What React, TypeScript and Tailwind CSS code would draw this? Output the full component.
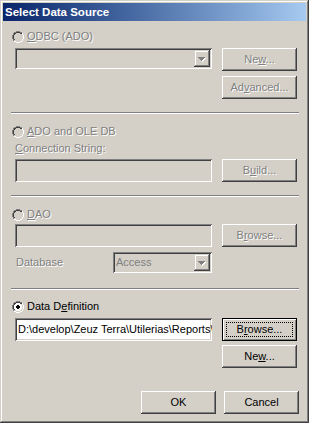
import React from "react";

const radioPattern = [
  "....GGGG....",
  "..GGKKKKGG..",
  ".GKKFFFFKKW.",
  ".GKFFFFFFHW.",
  "GKFFFFFFFFHW",
  "GKFFFFFFFFHW",
  "GKFFFFFFFFHW",
  "GKFFFFFFFFHW",
  ".GKFFFFFFHW.",
  ".GHHFFFFHHW.",
  "..WWHHHHWW..",
  "....WWWW....",
];
const dotPattern = ["....XX......", "...XXXX.....", "...XXXX.....", "....XX......"];

function Radio({ checked = false, disabled = false }: { checked?: boolean; disabled?: boolean }) {
  const colors: Record<string, string> = {
    G: "#808080",
    K: "#404040",
    W: "#ffffff",
    H: "#d4d0c8",
    F: disabled ? "#d4d0c8" : "#ffffff",
  };
  const rects: React.ReactNode[] = [];
  radioPattern.forEach((row, y) =>
    row.split("").forEach((c, x) => {
      if (c !== ".") rects.push(<rect key={`r${x}-${y}`} x={x} y={y} width={1} height={1} fill={colors[c]} />);
    })
  );
  if (checked) {
    dotPattern.forEach((row, y) =>
      row.split("").forEach((c, x) => {
        if (c === "X") rects.push(<rect key={`d${x}-${y}`} x={x + 1} y={y + 4} width={1} height={1} fill={disabled ? "#808080" : "#000"} />);
      })
    );
  }
  return (
    <svg width={12} height={12} viewBox="0 0 12 12" shapeRendering="crispEdges" className="shrink-0">
      {rects}
    </svg>
  );
}

function Arrow({ disabled }: { disabled: boolean }) {
  const rows = [
    [0, 7],
    [1, 5],
    [2, 3],
    [3, 1],
  ];
  return (
    <svg width={8} height={5} viewBox="0 0 8 5" shapeRendering="crispEdges">
      {disabled &&
        rows.map(([y, w]) => <rect key={`s${y}`} x={y + 1} y={y + 1} width={w} height={1} fill="#fff" />)}
      {rows.map(([y, w]) => (
        <rect key={`a${y}`} x={y} y={y} width={w} height={1} fill={disabled ? "#808080" : "#000"} />
      ))}
    </svg>
  );
}

function Combo({ width, text = "", disabled = true }: { width: string; text?: string; disabled?: boolean }) {
  return (
    <div
      className={`${width} h-[21px] bg-[#d4d0c8] p-[2px] flex items-stretch shadow-[inset_1px_1px_#808080,inset_-1px_-1px_#fff,inset_2px_2px_#404040,inset_-2px_-2px_#d4d0c8]`}
    >
      <div className="flex-1 flex items-center pl-[1px] text-[#808080] whitespace-nowrap overflow-hidden">{text}</div>
      <div className="w-[16px] flex items-center justify-center pt-[1px] shadow-[inset_-1px_-1px_#404040,inset_1px_1px_#d4d0c8,inset_-2px_-2px_#808080,inset_2px_2px_#fff]">
        <Arrow disabled={disabled} />
      </div>
    </div>
  );
}

function Edit({ text = "", disabled = true }: { text?: string; disabled?: boolean }) {
  return (
    <div
      className={`w-[197px] h-[23px] ${disabled ? "bg-[#d4d0c8]" : "bg-white"} pl-[3px] pr-[2px] flex items-center overflow-hidden whitespace-nowrap shadow-[inset_1px_1px_#808080,inset_-1px_-1px_#fff,inset_2px_2px_#404040,inset_-2px_-2px_#d4d0c8]`}
    >
      {text}
    </div>
  );
}

function Btn({
  children,
  disabled = false,
  isDefault = false,
  className = "",
}: {
  children: React.ReactNode;
  disabled?: boolean;
  isDefault?: boolean;
  className?: string;
}) {
  if (isDefault) {
    return (
      <div
        className={`w-[75px] h-[23px] shrink-0 border border-black p-[3px] flex shadow-[inset_1px_1px_#fff,inset_-1px_-1px_#808080] ${className}`}
      >
        <div className="flex-1 border border-dotted border-black flex items-center justify-center">{children}</div>
      </div>
    );
  }
  return (
    <div
      className={`w-[75px] h-[23px] shrink-0 flex items-center justify-center shadow-[inset_-1px_-1px_#404040,inset_1px_1px_#fff,inset_-2px_-2px_#808080,inset_2px_2px_#d4d0c8] ${
        disabled ? "text-[#808080] [text-shadow:1px_1px_0_#fff]" : "text-black"
      } ${className}`}
    >
      {children}
    </div>
  );
}

function Sep({ className = "" }: { className?: string }) {
  return <div className={`ml-[8px] w-[288px] h-[2px] border-t border-t-[#808080] border-b border-b-white ${className}`} />;
}

export default function App() {
  const dis = "text-[#808080] [text-shadow:1px_1px_0_#fff]";
  return (
    <div className="w-[309px] h-[423px] bg-[#d4d0c8] p-[3px] flex flex-col font-['Liberation_Sans',Arial,sans-serif] text-[11px] leading-[13px] text-black shadow-[inset_-1px_-1px_#404040,inset_1px_1px_#d4d0c8,inset_-2px_-2px_#808080,inset_2px_2px_#fff]">
      <div className="h-[18px] shrink-0 flex items-center pl-[2px] bg-gradient-to-r from-[#0a246a] to-[#a6caf0] text-white font-bold text-[11.5px]">
        Select Data Source
      </div>

      {/* ODBC */}
      <div className="mt-[9px] ml-[9px] flex items-center gap-[3px] h-[13px]">
        <Radio disabled />
        <span className={dis}>
          <u>O</u>DBC (ADO)
        </span>
      </div>
      <div className="mt-[5px] ml-[12px] flex items-start">
        <Combo width="w-[197px]" />
        <Btn disabled className="ml-[10px]">
          <span>
            Ne<u>w</u>...
          </span>
        </Btn>
      </div>
      <div className="mt-[5px] ml-[219px] flex">
        <Btn disabled>
          <span>
            Ad<u>v</u>anced...
          </span>
        </Btn>
      </div>

      <Sep className="mt-[13px]" />

      {/* ADO */}
      <div className="mt-[11px] ml-[9px] flex items-center gap-[3px] h-[13px]">
        <Radio disabled />
        <span className={dis}>
          <u>A</u>DO and OLE DB
        </span>
      </div>
      <div className={`mt-[4px] ml-[12px] h-[13px] ${dis}`}>
        <u>C</u>onnection String:
      </div>
      <div className="mt-[4px] ml-[12px] flex items-start">
        <Edit />
        <Btn disabled className="ml-[10px]">
          <span>
            B<u>u</u>ild...
          </span>
        </Btn>
      </div>

      <Sep className="mt-[13px]" />

      {/* DAO */}
      <div className="mt-[11px] ml-[9px] flex items-center gap-[3px] h-[13px]">
        <Radio disabled />
        <span className={dis}>
          <u>D</u>AO
        </span>
      </div>
      <div className="mt-[3px] ml-[12px] flex items-start">
        <Edit />
        <Btn disabled className="ml-[10px]">
          <span>
            B<u>r</u>owse...
          </span>
        </Btn>
      </div>
      <div className="mt-[5px] ml-[12px] flex items-center">
        <div className={`w-[98px] pl-[1px] ${dis}`}>Database</div>
        <Combo width="w-[99px]" text="Access" />
      </div>

      <Sep className="mt-[15px]" />

      {/* Data Definition */}
      <div className="mt-[10px] ml-[9px] flex items-center gap-[3px] h-[13px]">
        <Radio checked />
        <span>
          Data D<u>e</u>finition
        </span>
      </div>
      <div className="mt-[5px] ml-[12px] flex items-start">
        <Edit disabled={false} text="D:\develop\Zeuz Terra\Utilerias\Reports\" />
        <Btn isDefault className="ml-[10px]">
          <span>
            B<u>r</u>owse...
          </span>
        </Btn>
      </div>
      <div className="mt-[4px] ml-[219px] flex">
        <Btn>
          <span>
            Ne<u>w</u>...
          </span>
        </Btn>
      </div>

      <div className="mt-[23px] ml-[138px] flex gap-[8px]">
        <Btn>OK</Btn>
        <Btn>Cancel</Btn>
      </div>
    </div>
  );
}
